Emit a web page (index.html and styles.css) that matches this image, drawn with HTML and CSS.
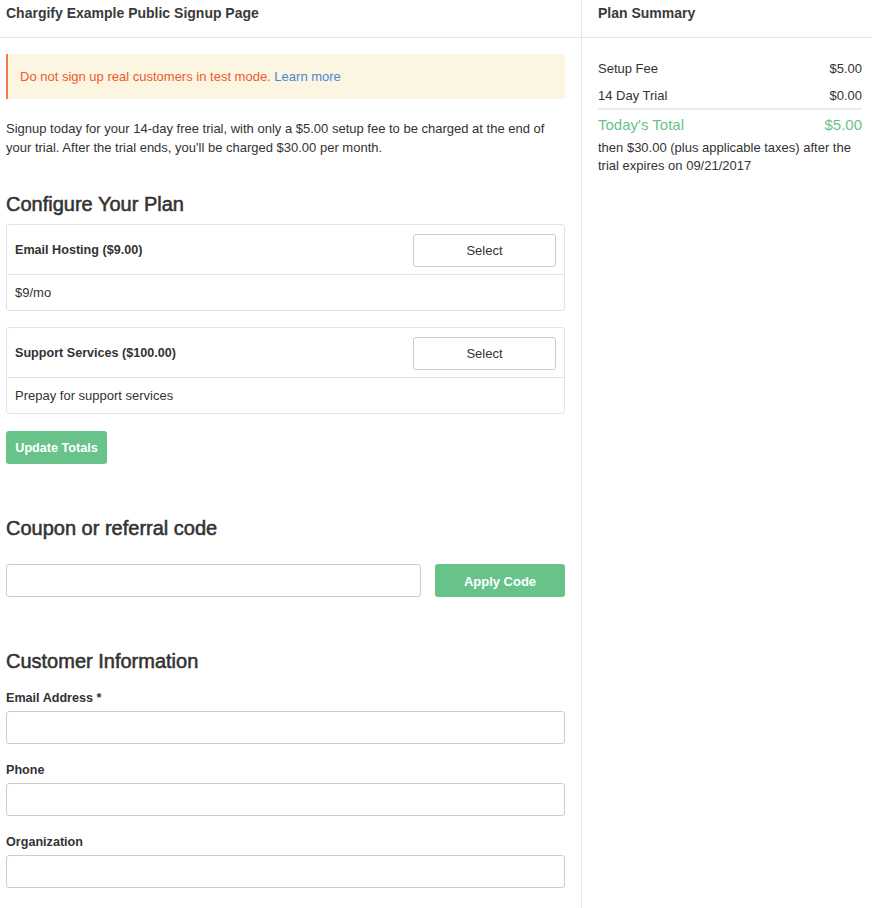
FILE: index.html
```html
<!DOCTYPE html>
<html>
<head>
<meta charset="utf-8">
<link rel="stylesheet" href="styles.css">
</head>
<body>
<div class="page">
  <main class="main">
    <header class="bar">Chargify Example Public Signup Page</header>
    <div class="content">
      <div class="alert">Do not sign up real customers in test mode. <a href="#">Learn more</a></div>
      <p class="intro">Signup today for your 14-day free trial, with only a $5.00 setup fee to be charged at the end of your trial. After the trial ends, you'll be charged $30.00 per month.</p>

      <h2 class="h-plan">Configure Your Plan</h2>
      <div class="panel">
        <div class="panel-head">
          <span class="panel-title">Email Hosting ($9.00)</span>
          <button class="btn-select">Select</button>
        </div>
        <div class="panel-body">$9/mo</div>
      </div>
      <div class="panel">
        <div class="panel-head">
          <span class="panel-title">Support Services ($100.00)</span>
          <button class="btn-select">Select</button>
        </div>
        <div class="panel-body">Prepay for support services</div>
      </div>
      <button class="btn-green btn-update">Update Totals</button>

      <h2 class="h-coupon">Coupon or referral code</h2>
      <div class="coupon-row">
        <input class="field coupon-input" type="text">
        <button class="btn-green btn-apply">Apply Code</button>
      </div>

      <h2 class="h-customer">Customer Information</h2>
      <label class="lbl">Email Address *</label>
      <input class="field" type="text">
      <label class="lbl">Phone</label>
      <input class="field" type="text">
      <label class="lbl">Organization</label>
      <input class="field" type="text">
    </div>
  </main>
  <aside class="side">
    <header class="bar side-bar">Plan Summary</header>
    <div class="side-content">
      <div class="line"><span>Setup Fee</span><span>$5.00</span></div>
      <div class="line"><span>14 Day Trial</span><span>$0.00</span></div>
      <div class="line total"><span>Today's Total</span><span>$5.00</span></div>
      <p class="then">then $30.00 (plus applicable taxes) after the trial expires on 09/21/2017</p>
    </div>
  </aside>
</div>
</body>
</html>
```
FILE: styles.css
```css
* { box-sizing: border-box; }
html, body { margin: 0; padding: 0; background: #fff; }
body {
  font-family: "Liberation Sans", Arial, sans-serif;
  font-size: 13px;
  color: #333;
}
.page {
  display: flex;
  width: 872px;
  min-height: 908px;
}
.main {
  width: 582px;
  border-right: 1px solid #e5e5e5;
}
.side { flex: 1; }
.bar {
  height: 38px;
  border-bottom: 1px solid #e5e5e5;
  font-size: 14px;
  font-weight: bold;
  color: #3a3a3a;
  padding: 5px 6px 0;
  line-height: 17px;
}
.side-bar { padding-left: 16px; }
.content {
  padding: 16px 16px 0 6px;
}
.alert {
  height: 45px;
  background: #fcf5e2;
  border-left: 2px solid #f27c45;
  color: #ee5a2c;
  padding: 14px 12px 0;
  line-height: 17px;
  font-size: 13px;
}
.alert a { color: #4a86d8; text-decoration: none; }
.intro {
  margin: 20px 0 0;
  line-height: 19px;
}
h2 {
  font-size: 20px;
  font-weight: normal;
  color: #333;
  margin: 0;
  line-height: 24px;
  -webkit-text-stroke: 0.55px #333;
}
.h-plan { margin-top: 35px; margin-bottom: 8px; }
.panel {
  border: 1px solid #e3e3e3;
  border-radius: 3px;
  margin-bottom: 16px;
}
.panel-head {
  height: 50px;
  display: flex;
  align-items: center;
  justify-content: space-between;
  padding: 0 8px;
  border-bottom: 1px solid #e3e3e3;
}
.panel-title { font-weight: bold; color: #333; font-size: 12.6px; }
.panel-body {
  height: 35px;
  padding: 0 8px;
  line-height: 36px;
}
.btn-select {
  width: 143px;
  height: 33px;
  background: #fff;
  border: 1px solid #ccc;
  border-radius: 3px;
  font-family: inherit;
  font-size: 13px;
  color: #333;
  margin-top: 1px;
}
.btn-green {
  background: #68c38b;
  color: #fff;
  border: none;
  border-radius: 3px;
  font-family: inherit;
  font-size: 13px;
  font-weight: bold;
  height: 33px;
  display: block;
}
.btn-update { width: 101px; margin-top: 17px; font-size: 12.6px; }
.h-coupon { margin-top: 52px; margin-bottom: 24px; }
.coupon-row {
  display: flex;
  gap: 14px;
}
.field {
  display: block;
  width: 100%;
  height: 33px;
  border: 1px solid #ccc;
  border-radius: 3px;
  background: #fff;
  margin: 0;
  font-family: inherit;
}
.coupon-input { width: 415px; flex: none; }
.btn-apply { flex: 1; padding-top: 2px; }
.h-customer { margin-top: 52px; margin-bottom: 17px; }
.lbl {
  display: block;
  font-weight: bold;
  line-height: 16px;
  margin-bottom: 5px;
  font-size: 12.6px;
}
.field + .lbl { margin-top: 18px; }
.side-content {
  padding: 22px 10px 0 16px;
}
.line {
  display: flex;
  justify-content: space-between;
  line-height: 17px;
  margin-bottom: 10px;
}
.line + .line.total {
  border-top: 2px solid #ebebeb;
  padding-top: 6px;
  margin-top: -6px;
  margin-bottom: 5px;
  font-size: 15px;
  color: #68c38b;
  line-height: 18px;
}
.then {
  margin: 0;
  line-height: 18px;
}
```
